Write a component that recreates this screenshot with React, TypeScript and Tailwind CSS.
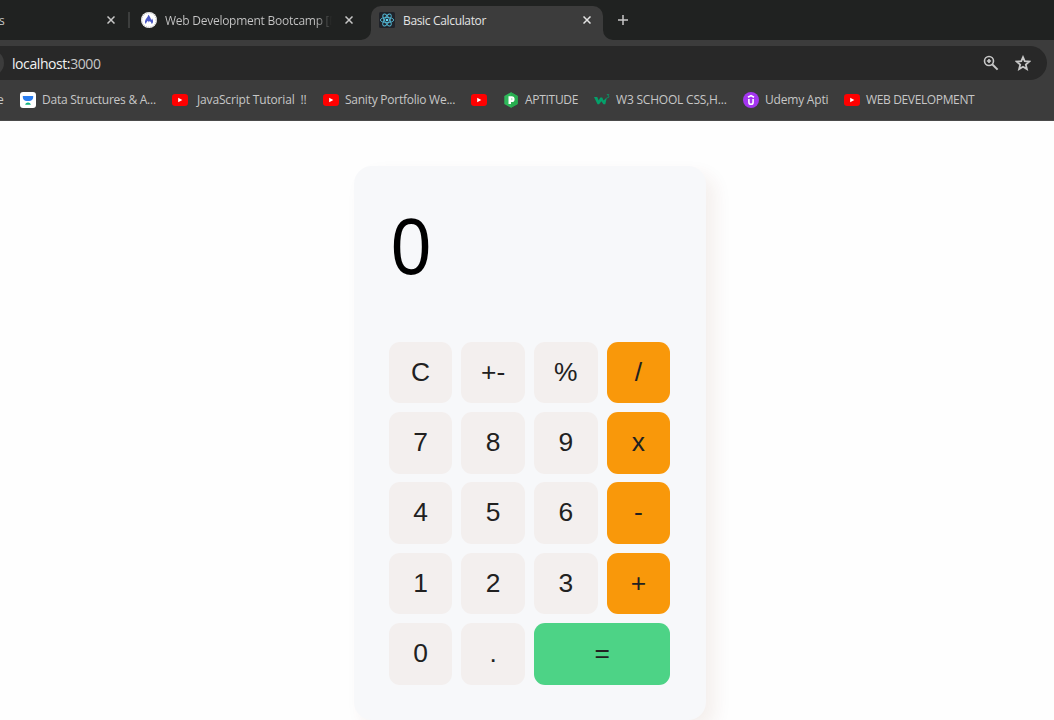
import type { ReactNode } from 'react';

function YouTube() {
  return (
    <svg viewBox="0 0 16 16" className="h-4 w-4 shrink-0">
      <rect x="0" y="2" width="16" height="12" rx="3.2" fill="#f00" />
      <path d="M6.2 5.8v4.4L10.3 8z" fill="#fff" />
    </svg>
  );
}

function CodingNinjas() {
  return (
    <svg viewBox="0 0 16 16" className="h-4 w-4 shrink-0">
      <rect width="16" height="16" rx="3" fill="#fff" />
      <path d="M2.8 4h10.4v1.2c0 2.3-1.8 3.9-4 3.9H6.8c-2.2 0-4-1.6-4-3.9z" fill="#2a7df0" />
      <path d="M5.2 12.8c0-1.5 1.2-2.4 2.8-2.4s2.8.9 2.8 2.4z" fill="#12b380" />
    </svg>
  );
}

function PrepInsta() {
  return (
    <svg viewBox="0 0 16 16" className="h-4 w-4 shrink-0">
      <path d="M8 .3l6.7 3.7v8L8 15.7 1.3 12V4z" fill="#2fb85a" />
      <path d="M8 .3l6.7 3.7v8L8 15.7z" fill="#28ad50" />
      <path d="M5.5 4.3h3.2a2.9 2.9 0 0 1 0 5.8H8V12H5.5z" fill="#fff" />
      <path d="M8 6v2.3h.5a1.1 1.1 0 0 0 0-2.3z" fill="#b6e8c4" />
    </svg>
  );
}

function W3() {
  return (
    <svg viewBox="0 0 16 16" className="h-4 w-4 shrink-0">
      <path d="M0 5h3.200l1.500 3.400L6.300 5.600h1.900l1.400 3L12.900 5.200l-1.600 7.100H9.400L7.400 9.300l-2.300 3H3.500z" fill="#04a06a" />
      <path d="M12.800 2.600h2.100l-1 1.300c1.400 0 1.400 2.100-.9 1.900" fill="none" stroke="#04a06a" strokeWidth=".8" />
    </svg>
  );
}

function Udemy() {
  return (
    <svg viewBox="0 0 16 16" className="h-4 w-4 shrink-0">
      <circle cx="8" cy="8" r="8" fill="#a435f0" />
      <path d="M5 5.3L8 3.6l3 1.7M5.9 6.9v3.300c0 2.800 4.200 2.800 4.200 0V6.900" fill="none" stroke="#fff" strokeWidth="1.6" />
    </svg>
  );
}

function Bootcamp() {
  return (
    <svg viewBox="0 0 16 16" className="h-4 w-4 shrink-0">
      <circle cx="8" cy="8" r="8" fill="#fff" />
      <circle cx="8" cy="8" r="7.2" fill="none" stroke="#a6a6a6" strokeWidth=".8" strokeDasharray="1.2 1" />
      <path d="M7.300 2.800c-.2 2.400-3 3.900-3.300 6.500-.1 1.300.3 2.200 1 2.800.1-1.500.9-2.500 1.800-3.300.6.500.9 1 1 1.700.4-.5.600-1 .6-1.500 1.300.7 2.200 1.800 2.300 3.100 1.800-1.400 1.700-3.800.4-5.600-.1.700-.5 1.100-.9 1.500C9.700 6 8.700 4.200 7.300 2.800z" fill="#4b58c4" />
    </svg>
  );
}

function ReactLogo() {
  return (
    <svg viewBox="0 0 16 16" className="h-4 w-4 shrink-0">
      <rect width="16" height="16" rx="1.5" fill="#20232a" />
      <g fill="none" stroke="#53b9d6" strokeWidth=".9">
        <ellipse cx="8" cy="8" rx="6.700" ry="2.600" />
        <ellipse cx="8" cy="8" rx="6.700" ry="2.600" transform="rotate(60 8 8)" />
        <ellipse cx="8" cy="8" rx="6.700" ry="2.600" transform="rotate(120 8 8)" />
      </g>
      <circle cx="8" cy="8" r="1.3" fill="#61dafb" />
    </svg>
  );
}

function Close({ bright = false }: { bright?: boolean }) {
  return (
    <svg viewBox="0 0 8 8" className="h-2 w-2 shrink-0">
      <path d="M.5.5l7 7M7.500.5l-7 7" fill="none" stroke={bright ? '#e3e3e3' : '#c7c7c7'} strokeWidth="1.5" />
    </svg>
  );
}

type Mark = { icon: ReactNode; text?: string; style: string };

const marks: Mark[] = [
  { icon: <CodingNinjas />, text: 'Data Structures & A...', style: 'w-[114px] tracking-[-0.25px]' },
  { icon: <YouTube />, text: 'JavaScript Tutorial  !!', style: 'w-[110px] ml-[3px] tracking-[-0.16px]' },
  { icon: <YouTube />, text: 'Sanity Portfolio We...', style: 'w-[110px] tracking-[-0.25px]' },
  { icon: <YouTube />, style: '' },
  { icon: <PrepInsta />, text: 'APTITUDE', style: 'w-[53px] tracking-[-0.3px]' },
  { icon: <W3 />, text: 'W3 SCHOOL CSS,H...', style: 'w-[111px] tracking-[-0.2px]' },
  { icon: <Udemy />, text: 'Udemy Apti', style: 'w-[63px] tracking-[-0.2px]' },
  { icon: <YouTube />, text: 'WEB DEVELOPMENT', style: 'w-[109px] tracking-[-0.36px]' },
];

function TabStrip() {
  return (
    <div className="flex h-10 shrink-0 items-start bg-[#202221] text-[#c7c7c7]">
      <div className="flex h-10 w-[130px] shrink-0 items-center">
        <span className="-ml-px w-[108px] pt-[2px]">s</span>
        <Close />
        <span className="ml-[13px] h-4 w-[2px] bg-[#3c3e3d]" />
      </div>
      <div className="flex h-10 w-[231px] shrink-0 items-center pl-[11px]">
        <Bootcamp />
        <div className="ml-2 w-[167px] whitespace-nowrap bg-linear-to-r from-[#c7c7c7] from-90% to-[#202221] bg-clip-text pt-[2px] tracking-[-0.26px] text-transparent">
          Web Development Bootcamp [M
        </div>
        <span className="ml-[13px] flex"><Close /></span>
      </div>
      <svg viewBox="0 0 10 10" className="h-[10px] w-[10px] shrink-0 self-end">
        <path d="M10 0v10H0A10 10 0 0 0 10 0z" fill="#3c3c3c" />
      </svg>
      <div className="mt-[6px] flex h-[34px] w-[232px] shrink-0 items-center rounded-t-[10px] bg-[#3c3c3c] pb-[6px] pl-2 text-[#e3e3e3]">
        <ReactLogo />
        <span className="ml-2 w-[180px] pt-[2px] tracking-[-0.34px]">Basic Calculator</span>
        <Close bright />
      </div>
      <svg viewBox="0 0 10 10" className="h-[10px] w-[10px] shrink-0 self-end">
        <path d="M0 0v10h10A10 10 0 0 1 0 0z" fill="#3c3c3c" />
      </svg>
      <svg viewBox="0 0 10 10" className="mt-[15px] ml-[5px] h-[10px] w-[10px]">
        <path d="M5 0v10M0 5h10" stroke="#c7c7c7" strokeWidth="1.5" />
      </svg>
    </div>
  );
}

function AddressBar() {
  return (
    <div className="mt-[6px] mr-[7px] flex h-[34px] items-center rounded-r-full bg-[#282828] pr-4">
      <svg viewBox="0 0 4 26" className="h-[26px] w-1 shrink-0">
        <circle cx="-9" cy="13" r="13" fill="#3c3c3c" />
      </svg>
      <span className="ml-2 text-[14px] tracking-[-0.42px] text-[#c7c7c7]">
        <span className="text-[#f1f1f1]">localhost:</span>3000
      </span>
      <div className="ml-auto flex items-center gap-[16px] text-[#c7c7c7]">
        <svg viewBox="0 0 16 16" className="h-4 w-4" fill="none" stroke="currentColor">
          <circle cx="6" cy="6" r="4.5" strokeWidth="1.6" />
          <path d="M6 3.900v4.200M3.900 6h4.200" strokeWidth="1.7" />
          <path d="M9.200 9.200l5.400 5.400" strokeWidth="2" />
        </svg>
        <svg viewBox="0 0 16 16" className="h-4 w-4" fill="none" stroke="currentColor">
          <path d="M8 2.200l1.700 4 4.600.4-3.500 3 1.100 4.500L8 11.700l-3.900 2.400 1.100-4.500-3.500-3 4.600-.4z" strokeWidth="1.8" />
        </svg>
      </div>
    </div>
  );
}

function Bookmarks() {
  return (
    <div className="flex h-10 items-center text-[#c7c7c7]">
      <span className="-ml-[3px] w-[23px] shrink-0">e</span>
      <div className="flex items-center gap-4">
        {marks.map((m, i) => (
          <div key={i} className="flex items-center gap-[6px]">
            {m.icon}
            {m.text && <span className={`whitespace-pre ${m.style}`}>{m.text}</span>}
          </div>
        ))}
      </div>
    </div>
  );
}

const keys = ['C', '+-', '%', '/', '7', '8', '9', 'x', '4', '5', '6', '-', '1', '2', '3', '+', '0', '.', '='];

function keyStyle(k: string) {
  if (k === '=') return 'col-span-2 bg-[#4dd386]';
  return ['/', 'x', '-', '+'].includes(k) ? 'bg-[#f9980a]' : 'bg-[#f3efee]';
}

function Calculator() {
  return (
    <div className="flex h-[554px] w-[352px] flex-col justify-between rounded-[18px] bg-[#f7f8fa] p-[35.2px] shadow-[9px_9px_18px_rgba(110,40,20,0.07)]">
      <div className="w-11 origin-center scale-x-[0.91] pt-px text-[79.2px] leading-[90px] text-black">0</div>
      <div className="grid grid-cols-4 gap-[8.8px]">
        {keys.map((k) => (
          <button key={k} className={`h-[61.6px] rounded-[11px] text-[26.4px] text-[#212121] ${keyStyle(k)}`}>
            {k}
          </button>
        ))}
      </div>
    </div>
  );
}

export default function App() {
  return (
    <div className="flex h-[720px] w-[1054px] flex-col overflow-hidden bg-[#fefefe] font-['Liberation_Sans',Arial,sans-serif]">
      <header className="flex h-[121px] shrink-0 flex-col font-['Open_Sans','Noto_Sans',sans-serif] text-[12px]">
        <TabStrip />
        <div className="h-[81px] border-b border-[#4a4a4a] bg-[#3c3c3c]">
          <AddressBar />
          <Bookmarks />
        </div>
      </header>
      <main className="flex justify-center pt-[45px] pl-[5px]">
        <Calculator />
      </main>
    </div>
  );
}
